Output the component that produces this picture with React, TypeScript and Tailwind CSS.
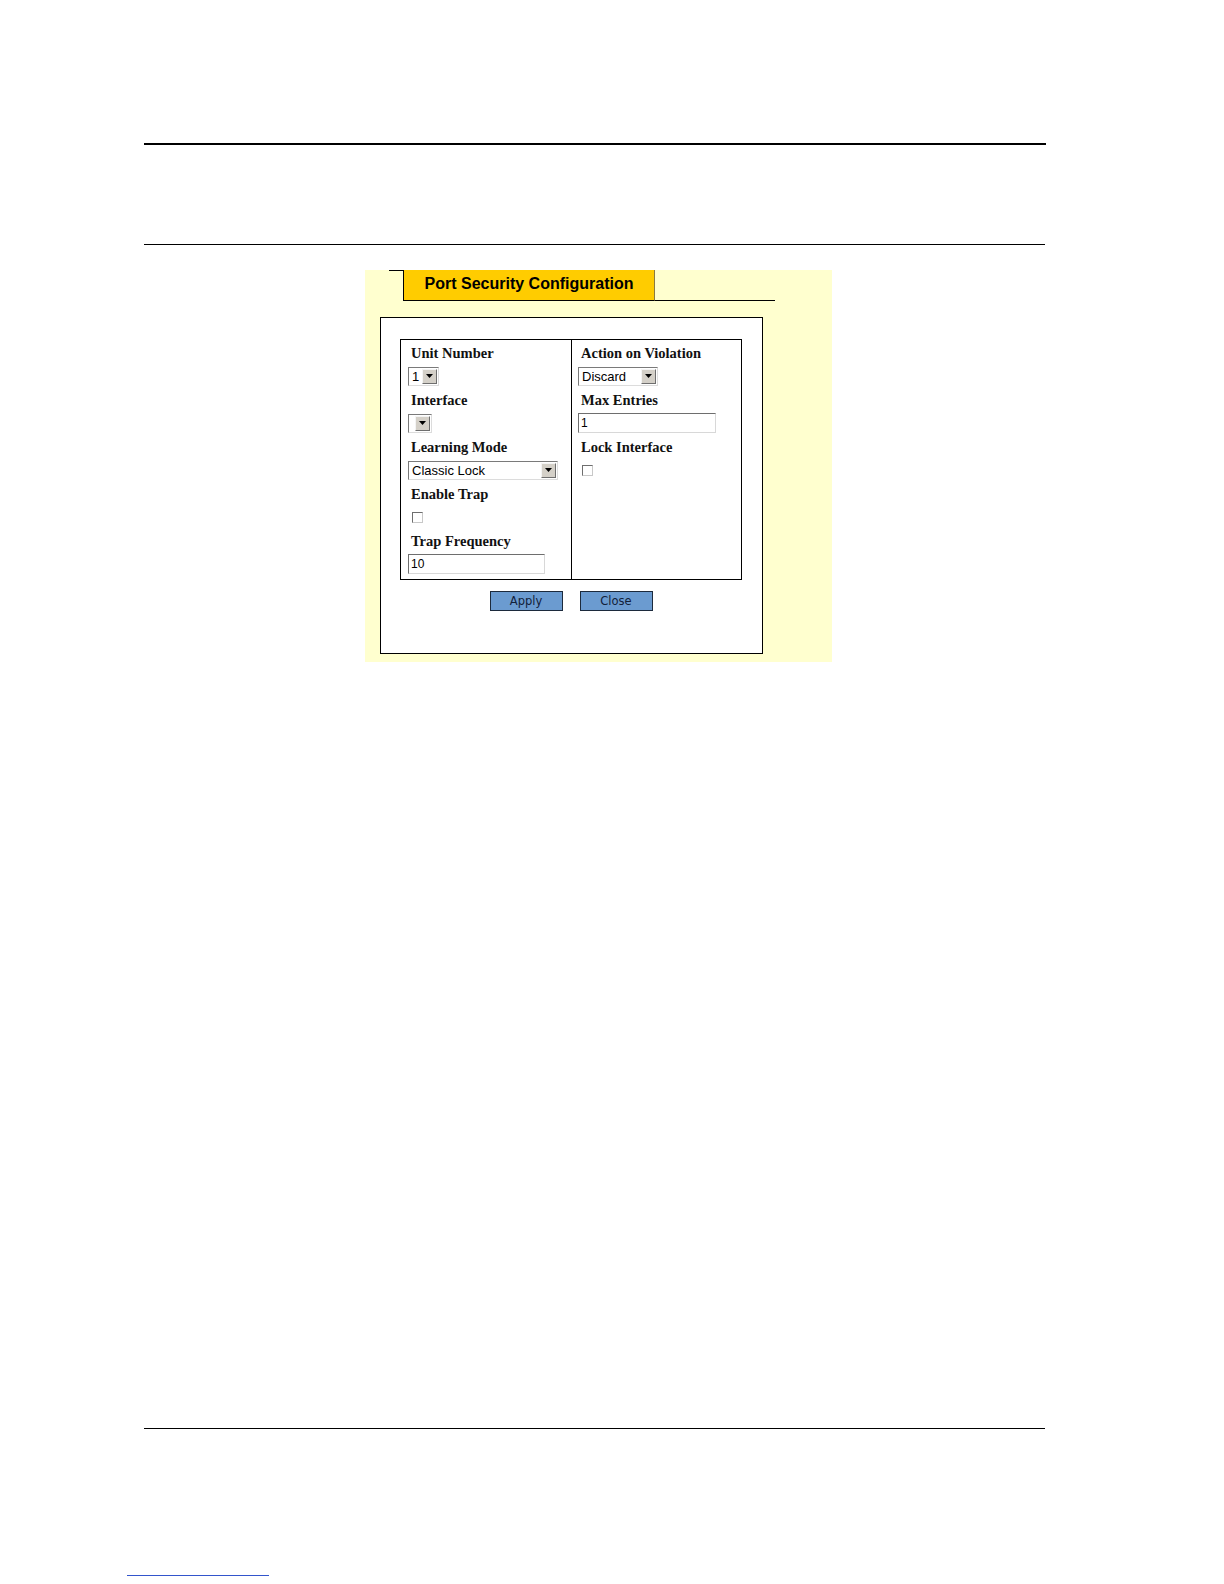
import type { ReactNode } from 'react'

// Old-style form controls (Windows classic look)
function Select({ value, width }: { value: string; width: number }) {
  return (
    <div
      className="flex h-[19px] items-stretch border border-t-[#7a7a7a] border-l-[#7a7a7a] border-r-[#dcdcdc] border-b-[#dcdcdc] bg-white"
      style={{ width }}
    >
      <span className="flex-1 overflow-hidden whitespace-nowrap pl-[3px] font-['Liberation_Sans',Arial,sans-serif] text-[13px] leading-[17px] text-black">
        {value}
      </span>
      <span className="m-px flex w-[15px] items-center justify-center border border-t-[#f4f4f4] border-l-[#f4f4f4] border-r-[#6e6e6e] border-b-[#6e6e6e] bg-[#d4d0c8]">
        <svg width="7" height="4" viewBox="0 0 7 4">
          <path d="M0 0h7L3.5 4z" fill="#000" />
        </svg>
      </span>
    </div>
  )
}

function TextInput({ value, width }: { value: string; width: number }) {
  return (
    <div
      className="h-[20px] border border-t-[#6e6e6e] border-l-[#6e6e6e] border-r-[#d8d8d8] border-b-[#d8d8d8] bg-white pl-[2px] font-['Liberation_Sans',Arial,sans-serif] text-[12px] leading-[18px] text-black"
      style={{ width }}
    >
      {value}
    </div>
  )
}

function Checkbox() {
  return <div className="ml-[4px] h-[11px] w-[11px] border border-t-[#6e6e6e] border-l-[#6e6e6e] border-r-[#c8c8c8] border-b-[#c8c8c8] bg-white" />
}

function Field({ label, children }: { label: string; children: ReactNode }) {
  return (
    <div className="mb-[2px]">
      <div className="h-[23px] whitespace-nowrap pl-[3px] font-['Liberation_Serif','Times_New_Roman',serif] text-[14.5px] font-bold leading-[23px] text-[#111]">
        {label}
      </div>
      <div className="flex h-[22px] items-center">{children}</div>
    </div>
  )
}

function Button({ children }: { children: ReactNode }) {
  return (
    <button
      type="button"
      className="h-[20px] w-[73px] border border-[#1c2a3c] bg-[#6b9bd0] font-['DejaVu_Sans',Verdana,sans-serif] text-[11.5px] leading-[18px] text-[#12213a]"
    >
      {children}
    </button>
  )
}

export default function App() {
  return (
    <div className="relative h-[1584px] w-[1224px] bg-white">
      <div className="ml-[144px] w-[902px] pt-[143px]">
        <div className="h-[2px] bg-black" />
        <div className="mt-[99px] h-px w-[901px] bg-black" />

        {/* Yellow dialog panel */}
        <div className="ml-[221px] mt-[25px] h-[392px] w-[467px] bg-[#ffffcf]">
          {/* Tab row */}
          <div className="flex h-[31px] items-start">
            <div className="ml-[24px] h-px w-[14px] bg-black" />
            <div className="flex h-[31px] w-[252px] items-center justify-center border-b border-l border-r border-b-black border-l-black border-r-[#8a7a40] bg-[#ffcc00] pb-[2px] font-['Liberation_Sans',Arial,sans-serif] text-[16px] font-bold text-black">
              Port Security Configuration
            </div>
            <div className="mt-[30px] h-px w-[120px] bg-black" />
          </div>

          {/* White content box */}
          <div className="ml-[15px] mt-[16px] h-[337px] w-[383px] border border-black bg-white pt-[21px]">
            <div className="ml-[19px] flex h-[241px] w-[342px] border border-black">
              <div className="w-[171px] border-r border-black pl-[7px] pt-[2px]">
                <Field label="Unit Number">
                  <Select value="1" width={31} />
                </Field>
                <Field label="Interface">
                  <Select value="" width={24} />
                </Field>
                <Field label="Learning Mode">
                  <Select value="Classic Lock" width={150} />
                </Field>
                <Field label="Enable Trap">
                  <Checkbox />
                </Field>
                <Field label="Trap Frequency">
                  <TextInput value="10" width={137} />
                </Field>
              </div>
              <div className="flex-1 pl-[6px] pt-[2px]">
                <Field label="Action on Violation">
                  <Select value="Discard" width={80} />
                </Field>
                <Field label="Max Entries">
                  <TextInput value="1" width={138} />
                </Field>
                <Field label="Lock Interface">
                  <Checkbox />
                </Field>
              </div>
            </div>
            <div className="ml-[19px] mt-[11px] flex w-[342px] justify-center gap-[17px]">
              <Button>Apply</Button>
              <Button>Close</Button>
            </div>
          </div>
        </div>

        <div className="mt-[766px] h-px w-[901px] bg-black" />
      </div>
      <div className="ml-[127px] mt-[146px] h-px w-[142px] bg-[#3355cc]" />
    </div>
  )
}
